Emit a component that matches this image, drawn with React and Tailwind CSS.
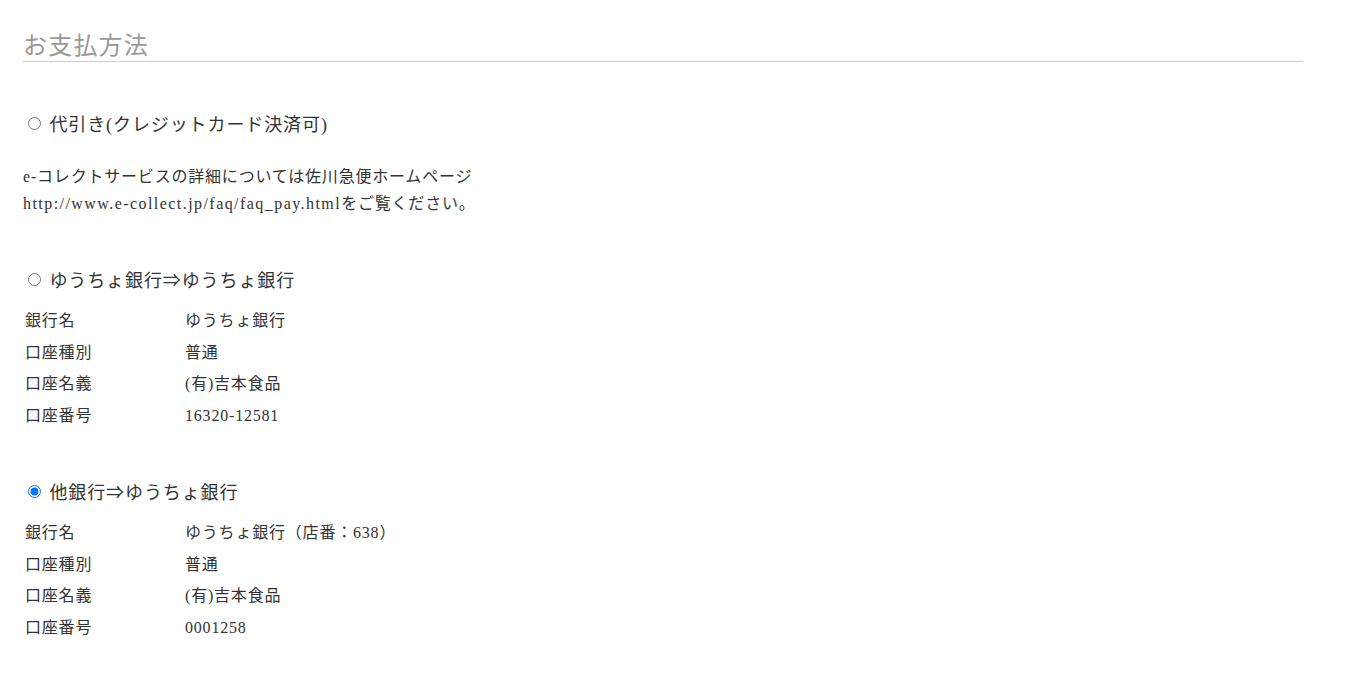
import React from "react";

const font = { fontFamily: '"Liberation Serif", "Noto Sans CJK JP", serif' };

function BankTable({ rows }) {
  return (
    <div className="mt-[9px] w-[1280px]">
      {rows.map(([k, v]) => (
        <div key={k} className="grid grid-cols-[160px_1fr] h-[31.5px] items-center text-[16px] leading-[31.5px] tracking-[0.05em]">
          <div className="px-[2px]">{k}</div>
          <div className="px-[2px]">{v}</div>
        </div>
      ))}
    </div>
  );
}

function Radio({ checked, children, className }) {
  return (
    <label className={"block h-[30px] leading-[30px] text-[18px] tracking-[0.05em] " + className}>
      <input type="radio" name="pay" defaultChecked={checked} className="ml-[5px] mr-[3px] align-[1px]" />{" "}
      {children}
    </label>
  );
}

export default function App() {
  return (
    <div className="bg-white min-h-[673px] text-[#333]" style={font}>
      <div className="pl-[23px] w-[1303px]">
        <div className="pt-[31px]">
          <h2 className="text-[24px] leading-[30px] tracking-[0.05em] text-[#999] border-b border-[#cccccc] font-normal">
            お支払方法
          </h2>
        </div>

        <Radio className="mt-[48px]">代引き(クレジットカード決済可)</Radio>

        <p className="mt-[23px] text-[16px] leading-[27px] tracking-[0.05em]">
          e-コレクトサービスの詳細については佐川急便ホームページ
          <br />
          <span className="tracking-[0.09em]">http://www.e-collect.jp/faq/faq_pay.html</span>をご覧ください。
        </p>

        <Radio className="mt-[49px]">ゆうちょ銀行⇒ゆうちょ銀行</Radio>
        <BankTable
          rows={[
            ["銀行名", "ゆうちょ銀行"],
            ["口座種別", "普通"],
            ["口座名義", "(有)吉本食品"],
            ["口座番号", "16320-12581"],
          ]}
        />

        <Radio checked className="mt-[47px]">他銀行⇒ゆうちょ銀行</Radio>
        <BankTable
          rows={[
            ["銀行名", "ゆうちょ銀行（店番：638）"],
            ["口座種別", "普通"],
            ["口座名義", "(有)吉本食品"],
            ["口座番号", "0001258"],
          ]}
        />
      </div>
    </div>
  );
}
